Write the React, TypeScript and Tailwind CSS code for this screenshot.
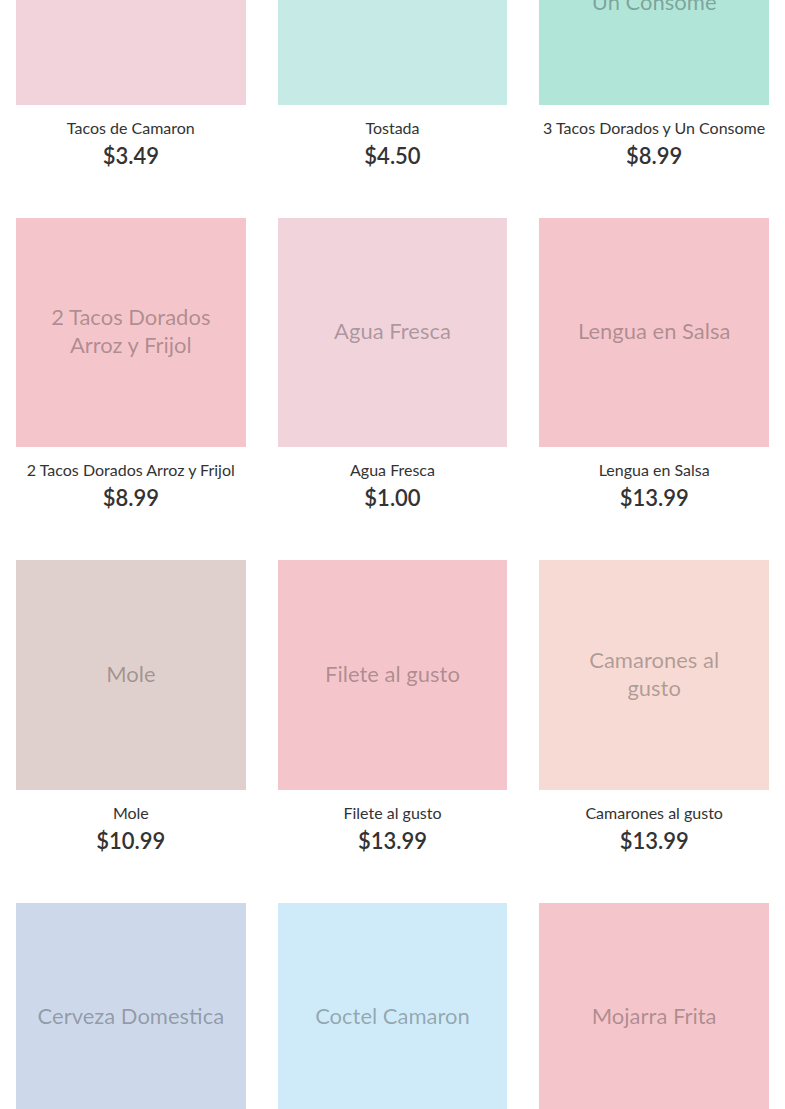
const items = [
  { name: "Tacos de Camaron", price: "$3.49", bg: "bg-[#f2d3dc]" },
  { name: "Tostada", price: "$4.50", bg: "bg-[#c6eae6]" },
  { name: "3 Tacos Dorados y Un Consome", price: "$8.99", bg: "bg-[#b1e5d8]" },
  { name: "2 Tacos Dorados Arroz y Frijol", price: "$8.99", bg: "bg-[#f4c5ca]" },
  { name: "Agua Fresca", price: "$1.00", bg: "bg-[#f1d3dc]" },
  { name: "Lengua en Salsa", price: "$13.99", bg: "bg-[#f4c5ca]" },
  { name: "Mole", price: "$10.99", bg: "bg-[#e0d0cd]" },
  { name: "Filete al gusto", price: "$13.99", bg: "bg-[#f4c5ca]" },
  { name: "Camarones al gusto", price: "$13.99", bg: "bg-[#f6dad3]" },
  { name: "Cerveza Domestica", price: "$6.99", bg: "bg-[#cdd9eb]" },
  { name: "Coctel Camaron", price: "$13.99", bg: "bg-[#cfeaf8]" },
  { name: "Mojarra Frita", price: "$12.99", bg: "bg-[#f4c5ca]" },
];

function MenuItem({ name, price, bg }: { name: string; price: string; bg: string }) {
  return (
    <div className="flex flex-col items-center text-center">
      <div className={`w-full aspect-square flex items-center justify-center px-[21px] pb-[3px] ${bg}`}>
        <span className="text-[22px] leading-7 text-black/30">{name}</span>
      </div>
      <p className="mt-[13px] text-[16px] leading-5 text-[#333]">{name}</p>
      <p className="mt-1 text-[22px] leading-7 font-semibold text-[#333]">{price}</p>
    </div>
  );
}

export default function App() {
  return (
    <div className="w-full bg-white overflow-hidden h-[1109px]" style={{ fontFamily: "Lato, 'Open Sans', sans-serif" }}>
      <div className="grid grid-cols-3 gap-x-8 gap-y-[48px] px-4 -mt-[125px]">
        {items.map((item) => (
          <MenuItem key={item.name} {...item} />
        ))}
      </div>
    </div>
  );
}
